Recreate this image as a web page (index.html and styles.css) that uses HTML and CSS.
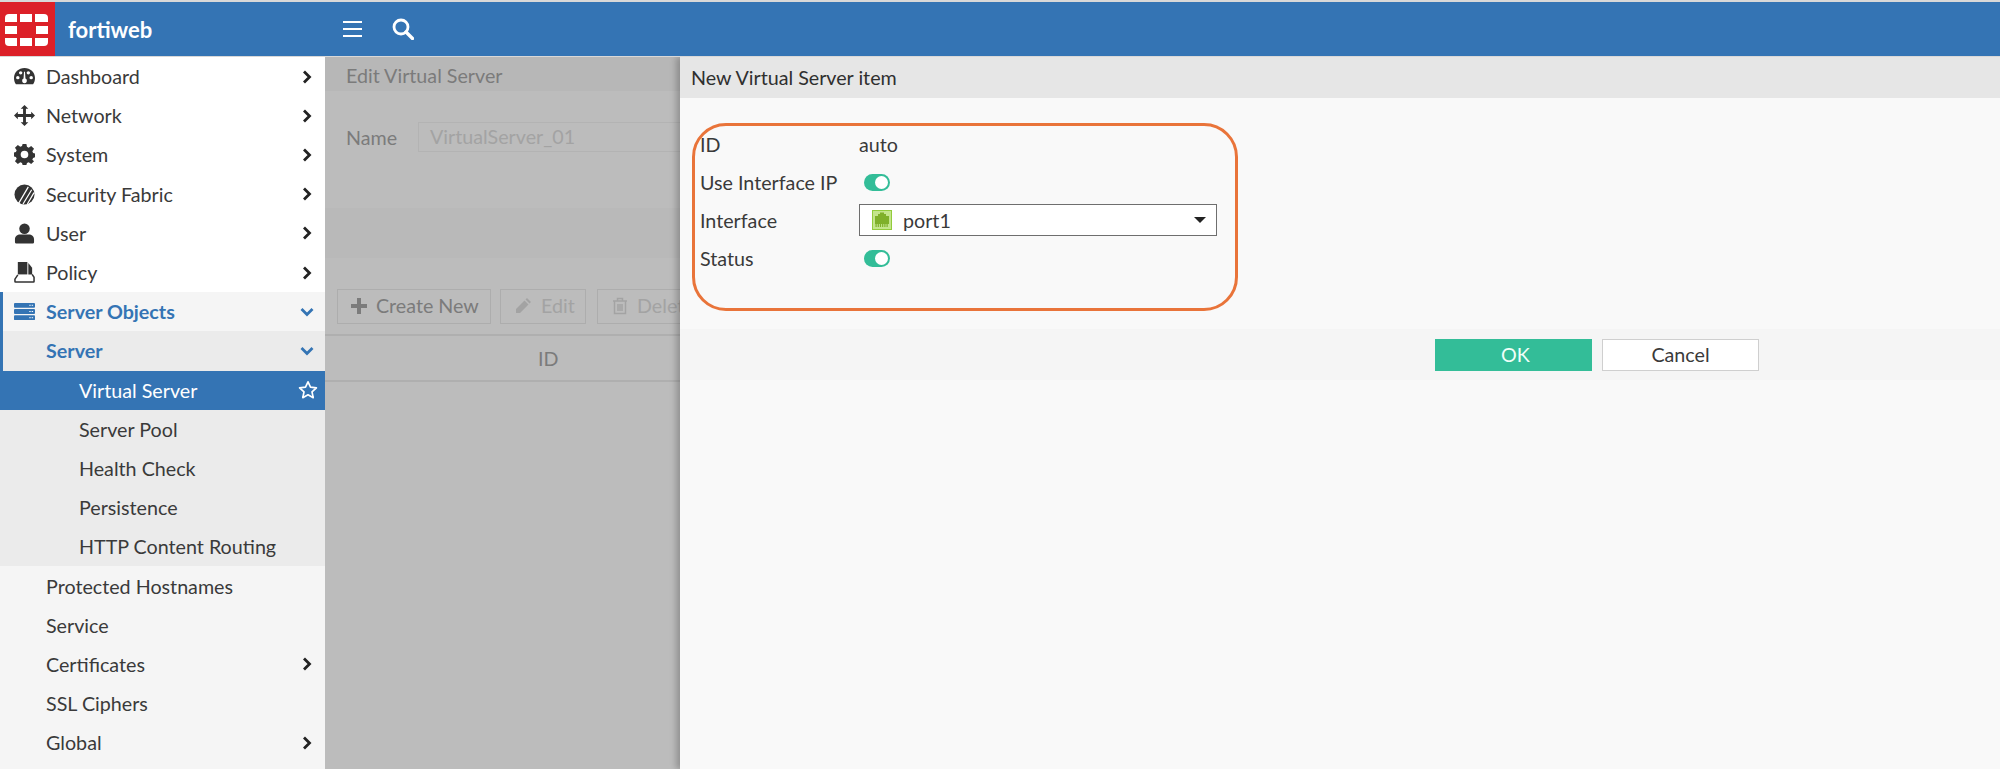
FILE: index.html
```html
<!DOCTYPE html>
<html lang="en">
<head>
<meta charset="utf-8">
<title>FortiWeb</title>
<link rel="stylesheet" href="styles.css">
</head>
<body>
<div class="app">
  <header class="topbar">
    <div class="logo">
      <svg viewBox="0 0 55 54" width="55" height="54">
        <g fill="#fff">
          <path d="M9 12h8v8H5v-4a4 4 0 0 1 4-4z"/>
          <rect x="20" y="12" width="12" height="8"/>
          <path d="M35 12h9a4 4 0 0 1 4 4v4H35z"/>
          <rect x="5" y="24" width="12" height="8"/>
          <rect x="36" y="24" width="12" height="8"/>
          <path d="M5 36h12v8H9a4 4 0 0 1-4-4z"/>
          <rect x="20" y="36" width="12" height="8"/>
          <path d="M35 36h13v4a4 4 0 0 1-4 4h-9z"/>
        </g>
      </svg>
    </div>
    <div class="brand">fortiweb</div>
    <div class="tools">
      <svg class="tool-menu" viewBox="0 0 19 16" width="19" height="16"><path d="M0 1h19M0 8h19M0 15h19" stroke="#fff" stroke-width="2.2"/></svg>
      <svg class="tool-search" viewBox="0 0 22 22" width="22" height="22"><circle cx="9" cy="9" r="7" fill="none" stroke="#fff" stroke-width="2.8"/><path d="M14 14l6.500 6.500" stroke="#fff" stroke-width="3.4" stroke-linecap="round"/></svg>
    </div>
  </header>
  <div class="body-row">
    <nav class="sidebar">
      <ul class="menu menu-top">
        <li class="item">
          <svg class="ico" viewBox="0 0 22 20"><path fill="#333" fill-rule="evenodd" d="M11 1C5 1 0 5.500 0 11.500c0 2.500.8 4.800 2 6.500h18c1.200-1.700 2-4 2-6.500C22 5.500 17 1 11 1zM4 13a1.800 1.800 0 1 1 0-3.600A1.800 1.800 0 0 1 4 13zm3-5a1.800 1.800 0 1 1 0-3.600A1.800 1.800 0 0 1 7 8zm4 9a2.500 2.500 0 0 1-1-4.800L10.500 5h1l.5 7.200A2.500 2.500 0 0 1 11 17zm4-9a1.800 1.800 0 1 1 0-3.600A1.800 1.800 0 0 1 15 8zm3 5a1.800 1.800 0 1 1 0-3.600 1.800 1.800 0 0 1 0 3.600z"/></svg>
          <span class="label">Dashboard</span>
          <svg class="chev" viewBox="0 0 10 14"><path d="M2 1.500L7.500 7 2 12.500" fill="none" stroke="#222" stroke-width="2.800"/></svg>
        </li>
        <li class="item">
          <svg class="ico" viewBox="0 0 22 22"><path fill="#333" d="M11 0l4 4h-2.500v5.500H18V7l4 4-4 4v-2.500h-5.500V18H15l-4 4-4-4h2.500v-5.500H4V15l-4-4 4-4v2.500h5.500V4H7z"/></svg>
          <span class="label">Network</span>
          <svg class="chev" viewBox="0 0 10 14"><path d="M2 1.500L7.500 7 2 12.500" fill="none" stroke="#222" stroke-width="2.800"/></svg>
        </li>
        <li class="item">
          <svg class="ico" viewBox="0 0 22 22"><path fill="#333" fill-rule="evenodd" d="M9 0h4l.6 3 1.800.8L18 2l3 3-1.800 2.600.8 1.800 2 .6v4l-2 .6-.8 1.800L21 18l-3 3-2.600-1.800-1.800.8-.6 2H9l-.6-2-1.800-.8L4 21l-3-3 1.800-2.600L2 13.600 0 13V9l2-.6.8-1.800L1 4l3-3 2.600 1.800L8.400 2zm2 7a4 4 0 1 0 0 8 4 4 0 0 0 0-8z"/></svg>
          <span class="label">System</span>
          <svg class="chev" viewBox="0 0 10 14"><path d="M2 1.500L7.500 7 2 12.500" fill="none" stroke="#222" stroke-width="2.800"/></svg>
        </li>
        <li class="item">
          <svg class="ico" viewBox="0 0 22 22"><circle cx="11" cy="11" r="10.500" fill="#333"/><path d="M5 20L15 3M9.500 21L18.500 6M14 21L21 9" stroke="#fff" stroke-width="1.300"/></svg>
          <span class="label">Security Fabric</span>
          <svg class="chev" viewBox="0 0 10 14"><path d="M2 1.500L7.500 7 2 12.500" fill="none" stroke="#222" stroke-width="2.800"/></svg>
        </li>
        <li class="item">
          <svg class="ico" viewBox="0 0 22 22"><circle cx="11" cy="6" r="5.500" fill="#333"/><path fill="#333" d="M2 21.500a1.500 1.500 0 0 1-1-1.500v-3c0-3 2.500-5 5.500-5h9c3 0 5.500 2 5.500 5v3a1.500 1.500 0 0 1-1 1.500z"/></svg>
          <span class="label">User</span>
          <svg class="chev" viewBox="0 0 10 14"><path d="M2 1.500L7.500 7 2 12.500" fill="none" stroke="#222" stroke-width="2.800"/></svg>
        </li>
        <li class="item">
          <svg class="ico" viewBox="0 0 22 22"><path fill="#333" d="M4 0h10v13H4z"/><path fill="#333" d="M15 1l4 5v7h-4z"/><path fill="none" stroke="#333" stroke-width="1.600" d="M4 13.500L1 18v2.500a.5.500 0 0 0 .5.500h19a.5.500 0 0 0 .5-.5V16l-2-3"/></svg>
          <span class="label">Policy</span>
          <svg class="chev" viewBox="0 0 10 14"><path d="M2 1.500L7.500 7 2 12.500" fill="none" stroke="#222" stroke-width="2.800"/></svg>
        </li>
      </ul>
      <ul class="menu menu-rest">
        <li class="item item-open">
          <svg class="ico" viewBox="0 0 22 18"><g fill="#3474b4"><rect y="0" width="22" height="5" rx="1"/><rect y="6.500" width="22" height="5" rx="1"/><rect y="13" width="22" height="5" rx="1"/></g><path d="M16 2.500h4M16 9h4M16 15.500h4" stroke="#fff" stroke-width="1" stroke-dasharray="1.500 1"/></svg>
          <span class="label">Server Objects</span>
          <svg class="chev" viewBox="0 0 14 10"><path d="M1.500 2L7 7.500 12.500 2" fill="none" stroke="#3474b4" stroke-width="2.800"/></svg>
        </li>
        <li class="item item-open item-sub">
          <span class="label label-indent">Server</span>
          <svg class="chev" viewBox="0 0 14 10"><path d="M1.500 2L7 7.500 12.500 2" fill="none" stroke="#3474b4" stroke-width="2.800"/></svg>
        </li>
        <li class="item item-active">
          <span class="label label-deep">Virtual Server</span>
          <svg class="star" viewBox="0 0 20 20" width="20" height="20"><path d="M10 1.800l2.500 5.400 5.900.7-4.400 4 1.200 5.800L10 14.800l-5.200 2.900L6 11.900l-4.400-4 5.900-.7z" fill="none" stroke="#fff" stroke-width="1.700" stroke-linejoin="round"/></svg>
        </li>
        <li class="item item-leaf"><span class="label label-deep">Server Pool</span></li>
        <li class="item item-leaf"><span class="label label-deep">Health Check</span></li>
        <li class="item item-leaf"><span class="label label-deep">Persistence</span></li>
        <li class="item item-leaf"><span class="label label-deep">HTTP Content Routing</span></li>
        <li class="item"><span class="label label-indent">Protected Hostnames</span></li>
        <li class="item"><span class="label label-indent">Service</span></li>
        <li class="item">
          <span class="label label-indent">Certificates</span>
          <svg class="chev" viewBox="0 0 10 14"><path d="M2 1.500L7.500 7 2 12.500" fill="none" stroke="#222" stroke-width="2.800"/></svg>
        </li>
        <li class="item"><span class="label label-indent">SSL Ciphers</span></li>
        <li class="item">
          <span class="label label-indent">Global</span>
          <svg class="chev" viewBox="0 0 10 14"><path d="M2 1.500L7.500 7 2 12.500" fill="none" stroke="#222" stroke-width="2.800"/></svg>
        </li>
      </ul>
    </nav>
    <main class="main">
      <div class="page-title">Edit Virtual Server</div>
      <div class="name-row">
        <span class="name-label">Name</span>
        <div class="name-input">VirtualServer_01</div>
      </div>
      <div class="band"></div>
      <div class="actions">
        <div class="btn btn-create">
          <svg viewBox="0 0 16 16" width="16" height="16"><path d="M8 0v16M0 8h16" stroke="#7c7c7c" stroke-width="4"/></svg>
          <span>Create New</span>
        </div>
        <div class="btn btn-edit">
          <svg viewBox="0 0 18 18" width="18" height="18"><path fill="#a3a3a3" d="M13 1l4 4-1.500 1.500-4-4zM10.500 3.500l4 4L6 16H2v-4z"/></svg>
          <span>Edit</span>
        </div>
        <div class="btn btn-delete">
          <svg viewBox="0 0 16 18" width="16" height="18"><path fill="none" stroke="#a3a3a3" stroke-width="1.500" d="M1 4h14M2.500 4v12.500h11V4M5.500 4V1.500h5V4M6 7v7M8 7v7M10 7v7"/></svg>
          <span>Delete</span>
        </div>
      </div>
      <div class="table-head"><span>ID</span></div>

      <section class="dialog">
        <h2 class="dialog-title">New Virtual Server item</h2>
        <div class="form">
          <div class="form-row"><span class="form-label">ID</span><span>auto</span></div>
          <div class="form-row"><span class="form-label">Use Interface IP</span><span class="toggle"></span></div>
          <div class="form-row">
            <span class="form-label">Interface</span>
            <div class="select">
              <svg class="port" viewBox="0 0 20 20" width="20" height="20"><rect x="0.500" y="0.500" width="19" height="19" fill="#c4e58c" stroke="#93cc3c"/><path fill="#7fb02a" d="M3 14V6h3V4h2V2.500h4V4h2v2h3v8z"/><path d="M3.500 15.500h13" stroke="#7fb02a" stroke-width="3" stroke-dasharray="1.200 1"/></svg>
              <span class="select-value">port1</span>
              <span class="caret"></span>
            </div>
          </div>
          <div class="form-row"><span class="form-label">Status</span><span class="toggle"></span></div>
        </div>
        <div class="dialog-footer">
          <button class="dlg-btn dlg-ok" type="button">OK</button>
          <button class="dlg-btn dlg-cancel" type="button">Cancel</button>
        </div>
        <div class="callout"></div>
      </section>
    </main>
  </div>
</div>
</body>
</html>
```

FILE: styles.css
```css
* { box-sizing: border-box; }
html, body { margin: 0; padding: 0; height: 100%; overflow: hidden; }
body { font-family: Lato, "Open Sans", sans-serif; font-size: 19.7px; color: #3a3a3a; background: #fff; }

.app { display: flex; flex-direction: column; height: 769px; padding-top: 2px; background: #d8d8d8; }

.topbar { display: flex; align-items: center; height: 54px; flex: none; background: #3474b4; color: #fff; }
.logo { width: 55px; height: 54px; background: #dc2028; flex: none; }
.logo svg { display: block; }
.brand { margin-left: 13px; width: 275px; font-size: 22px; font-weight: 700; }
.tools { display: flex; align-items: center; gap: 30px; }
.tools svg { display: block; }

.body-row { display: flex; flex: 1; min-height: 0; margin-top: 1px; }

.sidebar { width: 325px; flex: none; background: #f5f5f5; overflow: hidden; }
.menu { list-style: none; margin: 0; padding: 0; }
.menu-top { background: #fff; }

.item { display: flex; align-items: center; height: 39.2px; padding-left: 14px; padding-right: 11px; position: relative; }
.ico { width: 21px; height: 21px; flex: none; margin-right: 11px; }
.label { flex: 1; white-space: nowrap; }
.label-indent { padding-left: 32px; }
.label-deep { padding-left: 65px; }
.chev { width: 14px; height: 14px; flex: none; }

.item-open { color: #3474b4; font-weight: 700; box-shadow: inset 3px 0 0 #3474b4; }
.item-sub { background: #ebebeb; }
.item-active { background: #3474b4; color: #fff; padding-right: 7px; }
.item-leaf { background: #ebebeb; }
.star { flex: none; }

.main { flex: 1; position: relative; min-width: 0; background: #bcbcbc; color: #7b7b7b; overflow: hidden; }

.page-title { height: 34px; line-height: 37px; padding-left: 21px; background: #b7b7b7; }
.name-row { display: flex; align-items: center; height: 30px; margin-top: 31px; padding-left: 21px; }
.name-label { width: 72px; }
.name-input { width: 400px; height: 30px; line-height: 28px; padding-left: 11px; border: 1px solid #b3b3b3; color: #a3a3a3; }
.band { height: 50px; margin-top: 56px; background: #b9b9b9; }
.actions { display: flex; gap: 9px; height: 35px; margin-top: 31px; padding-left: 12px; }
.btn { display: flex; align-items: center; gap: 9px; height: 35px; padding: 0 8px 2px 13px; border: 1px solid #adadad; white-space: nowrap; }
.btn svg { flex: none; }
.btn-create { width: 154px; }
.btn-edit { width: 86px; color: #a3a3a3; }
.btn-delete { width: 120px; color: #a3a3a3; margin-left: 2px; padding-left: 14px; gap: 9px; }
.table-head { display: flex; align-items: center; justify-content: flex-start; width: 100%; height: 48px; margin-top: 10px; padding-left: 213px; border-top: 2px solid #afafaf; border-bottom: 2px solid #afafaf; }

.dialog { position: absolute; left: 355px; top: 0; right: 0; bottom: 0; background: #f9f9f9; color: #3a3a3a; box-shadow: -4px 0 6px rgba(0,0,0,.22); }
.dialog-title { margin: 0; height: 41px; line-height: 41px; padding-left: 11px; font-size: 19.7px; font-weight: 400; background: #e6e6e6; color: #2f2f2f; }
.form { padding: 27px 0 0 20px; height: 231px; }
.form-row { display: flex; align-items: center; height: 38px; }
.form-label { width: 159px; flex: none; white-space: nowrap; }
.toggle { position: relative; width: 26px; height: 17px; margin-left: 5px; border-radius: 9px; background: #33bd98; }
.toggle::after { content: ""; position: absolute; right: 2px; top: 2px; width: 13px; height: 13px; border-radius: 50%; background: #fff; }
.select { display: flex; align-items: center; width: 358px; height: 32px; padding-left: 12px; background: #fff; border: 1px solid #6e6e6e; }
.port { flex: none; }
.select-value { flex: 1; margin-left: 11px; }
.caret { width: 0; height: 0; margin-right: 10px; border-left: 6px solid transparent; border-right: 6px solid transparent; border-top: 6px solid #222; }

.dialog-footer { display: flex; align-items: center; justify-content: flex-start; gap: 10px; height: 51px; padding-left: 755px; background: #f5f5f5; }
.dlg-btn { width: 157px; height: 32px; padding: 0; font: 19.7px Lato, "Open Sans", sans-serif; }
.dlg-ok { padding-left: 4px; background: #33bd98; border: 1px solid #33bd98; color: #f0fff8; }
.dlg-cancel { background: #fff; border: 1px solid #cfcfcf; color: #3a3a3a; }

.callout { position: absolute; left: 12px; top: 66px; width: 546px; height: 188px; border: 3px solid #e9743a; border-radius: 34px; }
```
